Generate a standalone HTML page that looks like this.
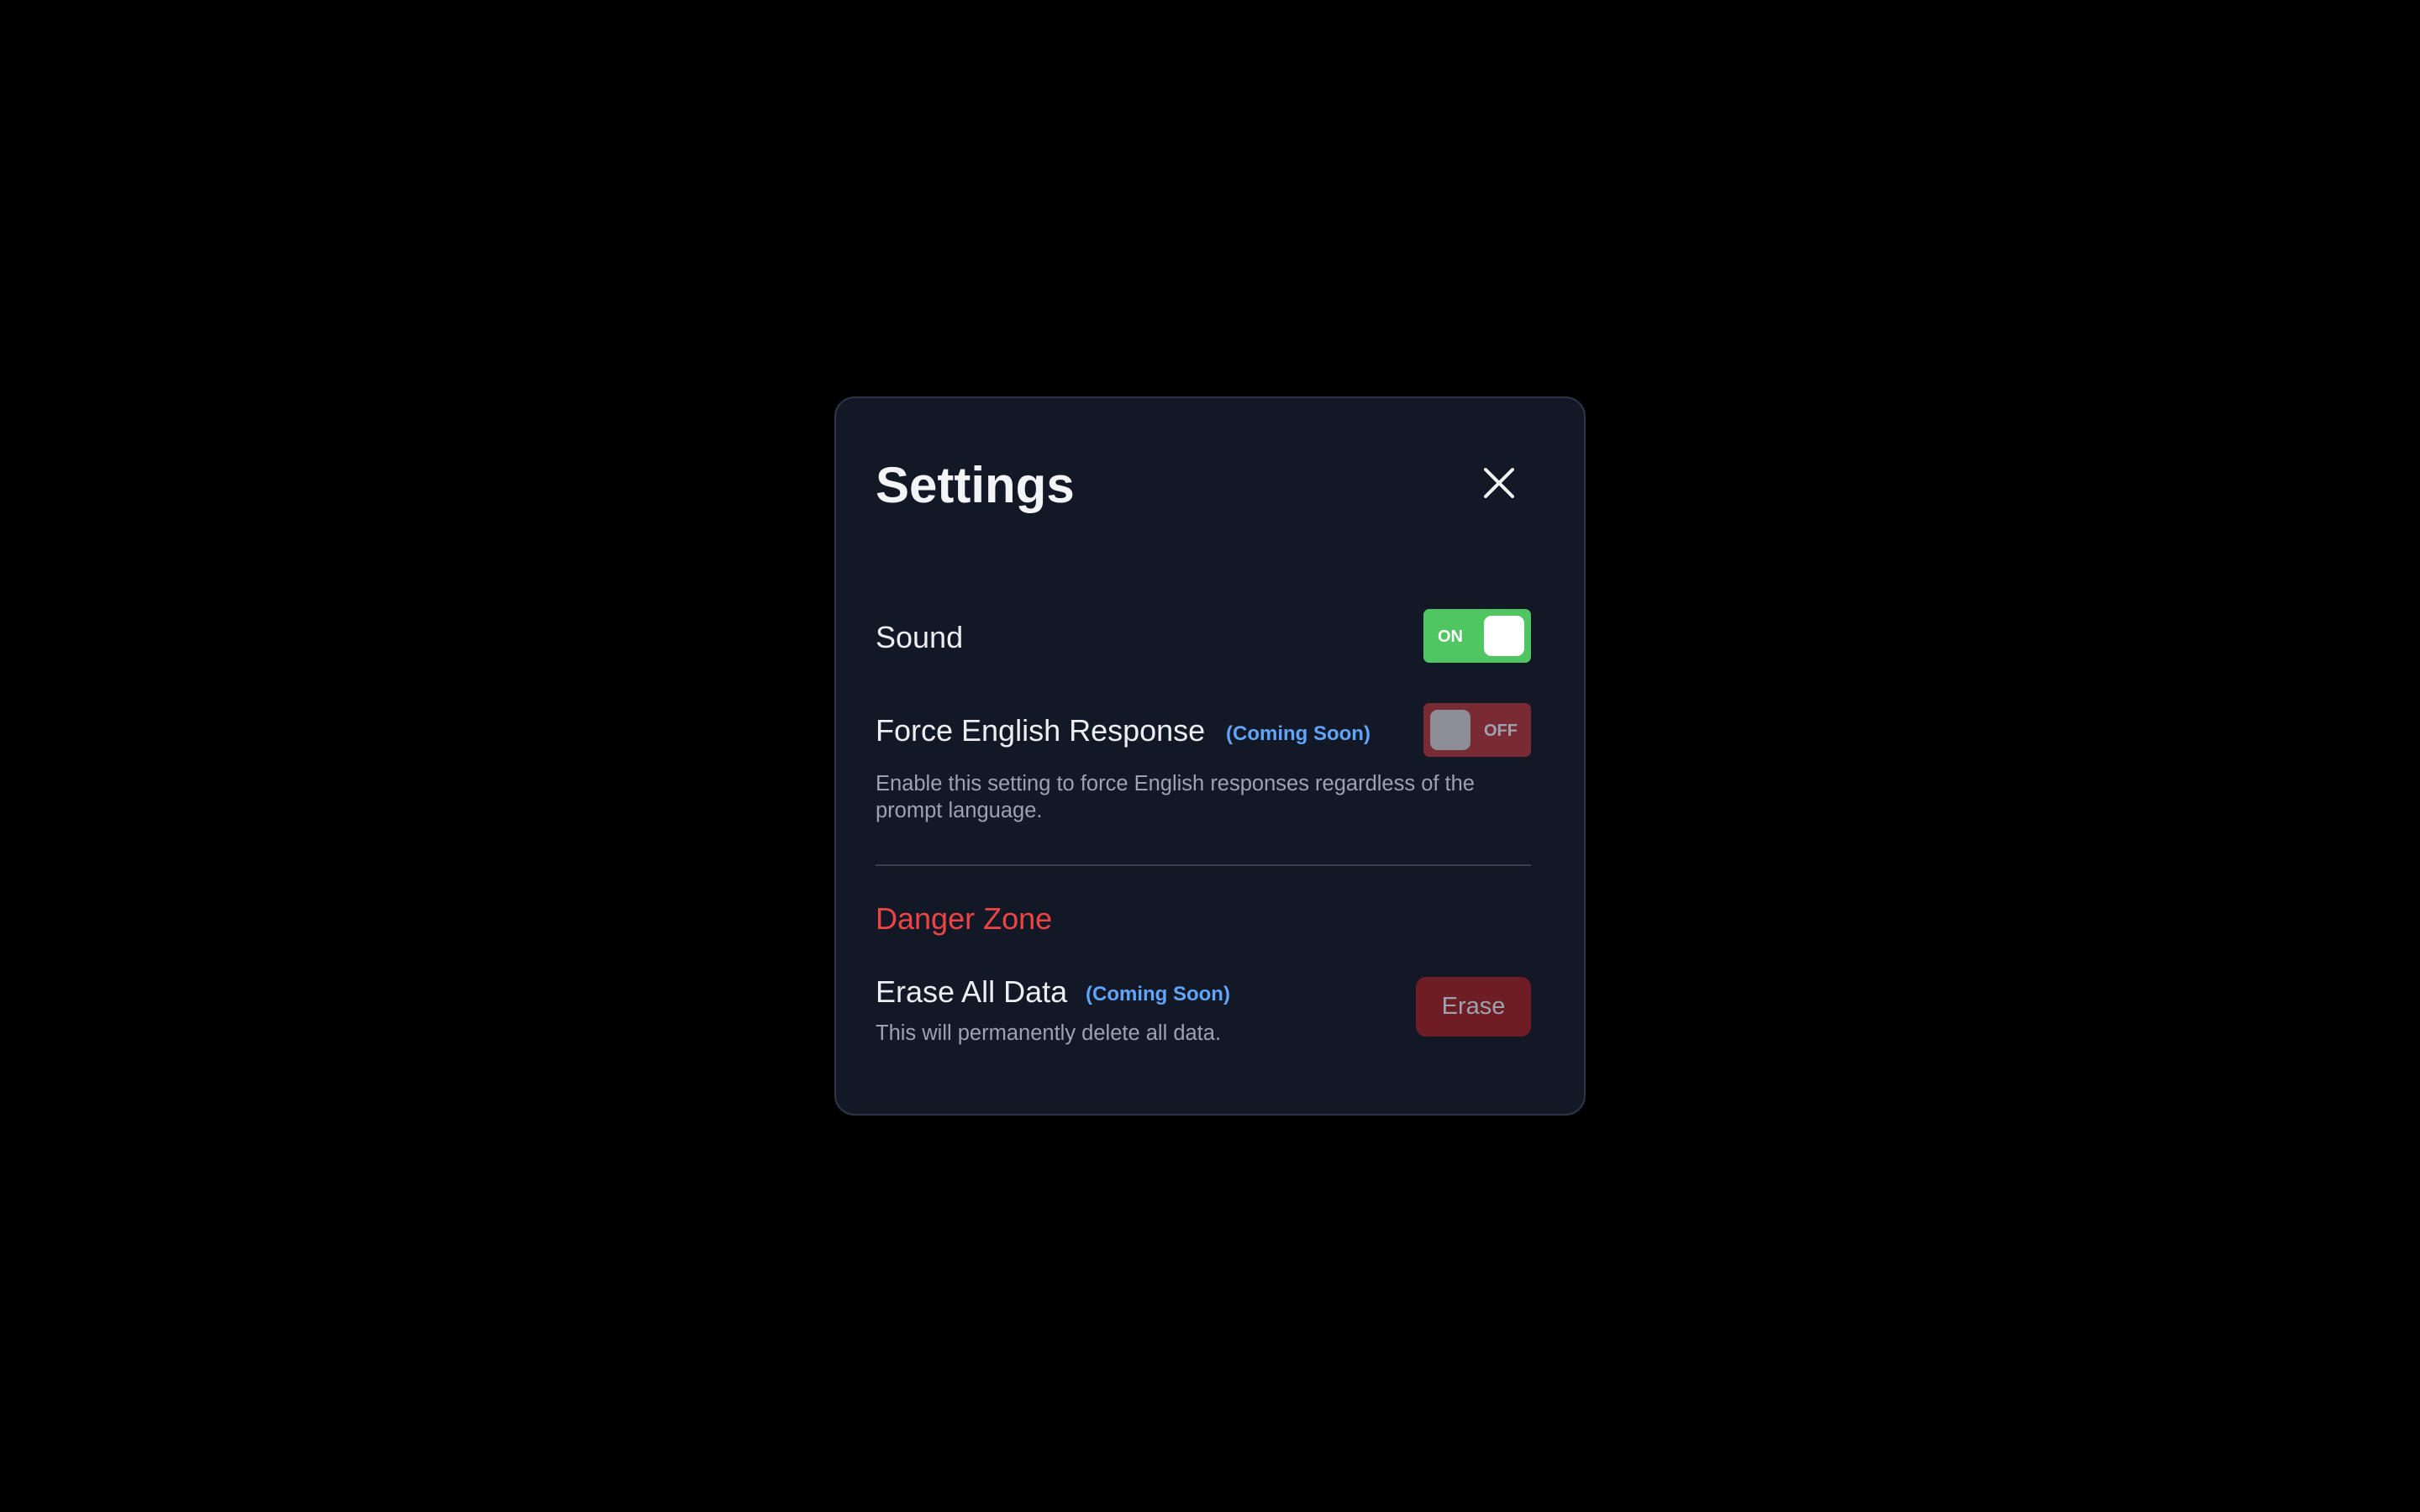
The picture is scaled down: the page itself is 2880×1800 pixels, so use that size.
<!DOCTYPE html>
<html><head><meta charset="utf-8"><style>
*{margin:0;padding:0;box-sizing:border-box}
html,body{width:2880px;height:1800px;background:#000;overflow:hidden;font-family:"Liberation Sans",sans-serif}
.modal{position:absolute;left:993px;top:472px;width:894px;height:856px;background:#131827;border:2px solid #2e3546;border-radius:24px}
.t{position:absolute;white-space:nowrap;line-height:1}
.title{left:1042px;top:548px;font-size:60px;font-weight:bold;color:#f3f4f6}
.lbl{font-size:36px;color:#eceef1}
.cs{font-size:24px;font-weight:bold;color:#60a5fa}
.desc{font-size:25.5px;color:#9ca3af;line-height:32px}
.tg{position:absolute;left:1694px;width:128px;height:64px;border-radius:7px}
.knob{position:absolute;top:8px;width:48px;height:48px;border-radius:9px}
</style></head><body>
<div class="modal"></div>
<div class="t title">Settings</div>
<svg style="position:absolute;left:1766px;top:557px" width="36" height="36" viewBox="0 0 36 36"><path d="M2 2L34 34M34 2L2 34" stroke="#f3f4f6" stroke-width="4" stroke-linecap="round"/></svg>

<div class="t lbl" style="left:1042px;top:741px">Sound</div>
<div class="tg" style="top:725px;background:#4fc662">
  <div class="t" style="left:17px;top:23px;font-size:20px;font-weight:bold;color:#fff">ON</div>
  <div class="knob" style="left:72px;background:#fff"></div>
</div>

<div class="t lbl" style="left:1042px;top:852px">Force English Response</div>
<div class="t cs" style="left:1459px;top:862px">(Coming Soon)</div>
<div class="tg" style="top:837px;background:#7a2a33">
  <div class="knob" style="left:8px;background:#8b8e96"></div>
  <div class="t" style="left:72px;top:23px;font-size:20px;font-weight:bold;color:#9ca3af">OFF</div>
</div>
<div class="t desc" style="left:1042px;top:917px;white-space:normal;width:780px">Enable this setting to force English responses regardless of the prompt language.</div>

<div style="position:absolute;left:1042px;top:1029px;width:780px;height:2px;background:#374151"></div>

<div class="t" style="left:1042px;top:1076px;font-size:36px;color:#ef4444">Danger Zone</div>
<div class="t lbl" style="left:1042px;top:1163px">Erase All Data</div>
<div class="t cs" style="left:1292px;top:1172px">(Coming Soon)</div>
<div class="t desc" style="left:1042px;top:1214px">This will permanently delete all data.</div>
<div style="position:absolute;left:1685px;top:1163px;width:137px;height:71px;border-radius:12px;background:#6e1d24;color:#9ca3af;font-size:29px;display:flex;align-items:center;justify-content:center">Erase</div>
</body></html>
